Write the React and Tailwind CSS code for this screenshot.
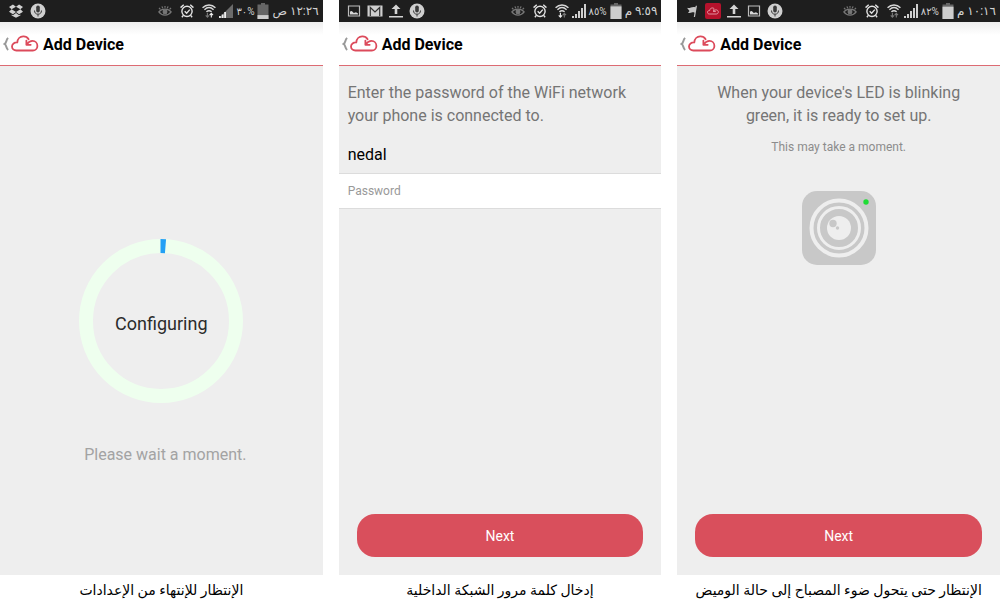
import React from 'react';

const CloudLogo = ({ className }) => (
  <svg
    viewBox="0 0 28 17"
    className={className}
    fill="none"
    stroke="currentColor"
    strokeWidth="1.8"
    strokeLinecap="round"
    strokeLinejoin="round"
  >
    <path d="M17.600 4.200C16.400 2.300 14.400 1.300 12.200 1.400 9 1.500 6.500 4 6.300 7.400 3.400 7.200 1 9 1 11.600c0 2.300 1.900 3.900 4.400 3.900h16.400c2.600 0 4.600-2 4.600-4.600 0-2.900-2.200-5-4.900-5-2.300 0-4.200 1.300-5.700 3.200" />
    <path d="M15.400 5.600v4.200h4.300" />
  </svg>
);

const DropboxIcon = () => (
  <svg viewBox="0 0 16 15" className="h-3.5 w-4" fill="#d0d0d0">
    <path d="M4.700 0.500 8 3 3.300 5.700.5 3.200zM11.300.5l4.200 2.700-2.800 2.500L8 3zM.5 8.200l2.800-2.500L8 8.500l-3.300 2.600zM12.700 5.700l2.800 2.500-4.200 2.900L8 8.500zM3.300 11.200l1.400.9L8 9.600l3.300 2.500 1.400-.9v1L8 14.800l-4.700-2.600z" />
  </svg>
);

const MicIcon = () => (
  <svg viewBox="0 0 16 16" className="size-4" fill="none">
    <circle cx="8" cy="8" r="7.500" fill="#cfcfcf" />
    <rect x="6.200" y="2.500" width="3.600" height="7" rx="1.800" fill="#3a3a3a" />
    <path d="M4.500 7.500c0 2.400 1.400 3.700 3.500 3.700s3.500-1.300 3.500-3.700M8 11.200v2.300" stroke="#3a3a3a" />
  </svg>
);

const PictureIcon = () => (
  <svg viewBox="0 0 14 14" className="size-3.5" fill="none">
    <path d="M1.500 2h11v10h-11z" stroke="#bdbdbd" strokeWidth="1.200" />
    <path d="M3 10.500V7.500l1.800-.5 2 2L9 8.300l2 1.200v1z" fill="#d8d8d8" />
  </svg>
);

const MailIcon = () => (
  <svg viewBox="0 0 16 12" className="h-3 w-4">
    <path d="M.5.5h15v11H.5z" fill="#cfcfcf" />
    <path d="M3.300 11V2.500L8 7l4.700-4.500V11" fill="none" stroke="#333" strokeWidth="1.200" />
  </svg>
);

const UploadIcon = () => (
  <svg viewBox="0 0 14 14" className="size-3.5" fill="#d4d4d4">
    <path d="M7 .5 11.500 5H8.300v5H5.700V5H2.500zM0 12h14v1.500H0z" />
  </svg>
);

const FlagIcon = () => (
  <svg viewBox="0 0 14 14" className="size-3.5" fill="#c4c4c4">
    <path d="M12 1.800 10 13H8.800l.7-4.200C7.800 7.300 6 9.900 3 8.700L4.500 7 2 3.700C5 5 6.500 2 10.300 3.200L10.800 1.800z" />
  </svg>
);

const CloudAppIcon = () => (
  <span className="flex size-4 items-center justify-center rounded-xs bg-[#b5122c] text-[#f0b8c0]">
    <CloudLogo className="h-2 w-3" />
  </span>
);

const EyeIcon = () => (
  <svg viewBox="0 0 15 13" className="h-3 w-3.5" fill="none" stroke="#777" strokeWidth="1.300">
    <path d="M.8 7.500C4 3.500 11 3.500 14.200 7.500 11 12 4 12 .8 7.500zM2.500 4.800 1 3M5 3.500 4.200 1.500M7.500 3V1M10 3.500l.8-2M12.500 4.800 14 3" />
    <circle cx="7.500" cy="7.500" r="2" fill="#777" />
  </svg>
);

const AlarmIcon = () => (
  <svg viewBox="0 0 15 15" className="size-3.5" fill="none" stroke="#e2e2e2" strokeWidth="1.500">
    <circle cx="7.500" cy="7.900" r="5.500" />
    <path d="M.6 3.900 4 .9M14.400 3.900 11 .9M3.600 12.200 2 14.200M11.400 12.200l1.600 2M5 7.700l2.100 2.100L10.500 6" />
  </svg>
);

const WifiIcon = ({ up, down }) => (
  <svg viewBox="0 0 15 15" className="size-3.5" fill="none" stroke="#d8d8d8" strokeWidth="1.500">
    <path d="M.6 4C4.600 0 10.400 0 14.400 4M2.600 6.200c3-2.900 6.800-2.900 9.800 0M4.700 8.400c1.800-1.600 3.800-1.600 5.600 0" />
    <path d="M5.800 9.500v4.500M4 12.200l1.800 1.900 1.800-1.900" stroke={down} strokeWidth="1.200" />
    <path d="M10 14.500V10M8.200 11.800 10 9.900l1.800 1.900" stroke={up} strokeWidth="1.200" />
  </svg>
);

const SignalIcon = ({ weak }) =>
  weak ? (
    <svg viewBox="0 0 14 14" className="size-3.5">
      <path d="M14 0v14H0z" fill="#6b6b6b" />
      <path d="M0 12h1.800v2H0zM2.700 10.500h1.800V14H2.700zM5.200 8H7v6H5.200z" fill="#eee" />
    </svg>
  ) : (
    <svg viewBox="0 0 14 14" className="size-3.5" fill="#cfcfcf">
      <path d="M0 12h2v2H0zM3 10h2v4H3zM6 7h2v7H6zM9 4h2v10H9zM12 0h2v14h-2z" />
    </svg>
  );

const BatteryIcon = ({ level }) => (
  <svg viewBox="0 0 12 16" className="h-4 w-3">
    <path d="M4 0h4v1.500h3.500V16H.5V1.500H4z" fill="#666" />
    <rect x="0.5" y={16 - 14 * level} width="11" height={14 * level} fill="#cdcdcd" />
  </svg>
);

const StatusBar = ({ children, percent, level, time, weak, up, down }) => (
  <div className="flex h-[22px] items-center justify-between bg-[#1e1e1e] pr-1 pl-2 text-[#d2d2d2]">
    <div className="flex items-center gap-1.5">{children}</div>
    <div className="flex items-center gap-[3px]">
      <div className="flex items-center gap-2">
        <EyeIcon />
        <AlarmIcon />
        <WifiIcon up={up} down={down} />
      </div>
      <SignalIcon weak={weak} />
      <span className="text-[10px]">{percent}</span>
      <BatteryIcon level={level} />
      <span dir="rtl" className="text-[12px] whitespace-nowrap">{time}</span>
    </div>
  </div>
);

const Header = () => (
  <header className="flex h-11 flex-col bg-white">
    <div className="flex grow items-center bg-linear-to-b from-[#eeeeee] to-white to-30% pl-[3px]">
      <a href="#back" aria-label="Back" className="flex items-center gap-0.5">
        <svg viewBox="0 0 6 14" className="h-3.5 w-1.5" fill="none" stroke="#999" strokeWidth="2">
          <path d="M5.200 1C2.800 2.500 4 5.600 1.500 7c2.500 1.400 1.300 4.500 3.700 6" />
        </svg>
        <CloudLogo className="h-[17px] w-7 text-[#dc4a5b]" />
      </a>
      <h1 className="ml-1 pt-0.5 text-[16px] font-bold text-black">Add Device</h1>
    </div>
    <div className="h-px bg-[#dd6b73]" />
  </header>
);

const NextButton = () => (
  <button
    type="button"
    className="mx-[18px] mt-auto mb-[18px] h-[43px] rounded-[18px] bg-[#d94f5c] pt-0.5 text-[14px] text-white"
  >
    Next
  </button>
);

const Screen = ({ status, caption, children }) => (
  <section className="flex min-w-0 flex-col">
    <div className="flex grow flex-col bg-[#eeeeee]">
      {status}
      <Header />
      <div className="flex grow flex-col">{children}</div>
    </div>
    <p dir="rtl" className="h-[38px] pt-[3px] text-center text-[14px] leading-6 whitespace-nowrap text-black">
      {caption}
    </p>
  </section>
);

const ProgressRing = ({ label }) => (
  <div className="grid place-items-center">
    <svg viewBox="0 0 164 164" className="col-start-1 row-start-1 size-[164px]" fill="none" strokeWidth="14">
      <circle cx="82" cy="82" r="75" stroke="#eeffee" />
      <path d="M81.500 7Q84 7 86.500 7.200" stroke="#23a0f5" />
    </svg>
    <span className="col-start-1 row-start-1 pt-1 text-[18px] text-[#2b2b2b]">{label}</span>
  </div>
);

const CameraIcon = () => (
  <svg viewBox="0 0 74 74" className="mx-auto mt-9 size-[74px]" fill="none">
    <rect width="74" height="74" rx="15" fill="#c8c8c8" />
    <circle cx="37" cy="37" r="27.500" stroke="#eee" strokeWidth="4" />
    <circle cx="37" cy="37" r="20.500" stroke="#eee" strokeWidth="3" />
    <circle cx="37" cy="37" r="12" fill="#eee" />
    <circle cx="31" cy="32.500" r="3.700" fill="#c8c8c8" />
    <circle cx="35.500" cy="37" r="1.700" fill="#c8c8c8" />
    <circle cx="64" cy="11" r="2.700" fill="#1fdc35" />
  </svg>
);

const App = () => {
  return (
    <main className="grid min-h-screen grid-cols-3 gap-4 bg-white font-[Roboto,'DejaVu_Sans',sans-serif]">
      <Screen
        caption="الإنتظار للإنتهاء من الإعدادات"
        status={
          <StatusBar percent="٣٠%" level={0.28} time="١٢:٢٦ ص" weak up="#eee" down="#777">
            <DropboxIcon />
            <MicIcon />
          </StatusBar>
        }
      >
        <div className="flex flex-col items-center pt-[173px]">
          <ProgressRing label="Configuring" />
          <p className="mt-10 pl-2 text-[16px] leading-6 text-[#a3a3a3]">Please wait a moment.</p>
        </div>
      </Screen>

      <Screen
        caption="إدخال كلمة مرور الشبكة الداخلية"
        status={
          <StatusBar percent="٨٥%" level={0.9} time="٩:٥٩ م" up="#777" down="#eee">
            <PictureIcon />
            <MailIcon />
            <UploadIcon />
            <MicIcon />
          </StatusBar>
        }
      >
        <form className="flex grow flex-col">
          <p className="px-[9px] pt-[15px] text-[16px] leading-[23px] text-[#757575]">
            Enter the password of the WiFi network your phone is connected to.
          </p>
          <label htmlFor="password" className="px-[9px] pt-4 text-[16px] leading-6 text-black">
            nedal
          </label>
          <input
            id="password"
            type="password"
            placeholder="Password"
            className="mt-1.5 h-9 w-full border-y border-[#dcdcdc] bg-white px-[9px] text-[12px] outline-none placeholder:text-[#999999]"
          />
          <NextButton />
        </form>
      </Screen>

      <Screen
        caption="الإنتظار حتى يتحول ضوء المصباح إلى حالة الوميض"
        status={
          <StatusBar percent="٨٢%" level={0.88} time="١٠:١٦ م" up="#777" down="#777">
            <FlagIcon />
            <CloudAppIcon />
            <UploadIcon />
            <PictureIcon />
            <MicIcon />
          </StatusBar>
        }
      >
        <p className="px-8 pt-[15px] text-center text-[16px] leading-[23px] text-[#757575]">
          When your device's LED is blinking green, it is ready to set up.
        </p>
        <p className="mt-3 text-center text-[12px] leading-4 text-[#8c8c8c]">This may take a moment.</p>
        <CameraIcon />
        <NextButton />
      </Screen>
    </main>
  );
};

export default App;
